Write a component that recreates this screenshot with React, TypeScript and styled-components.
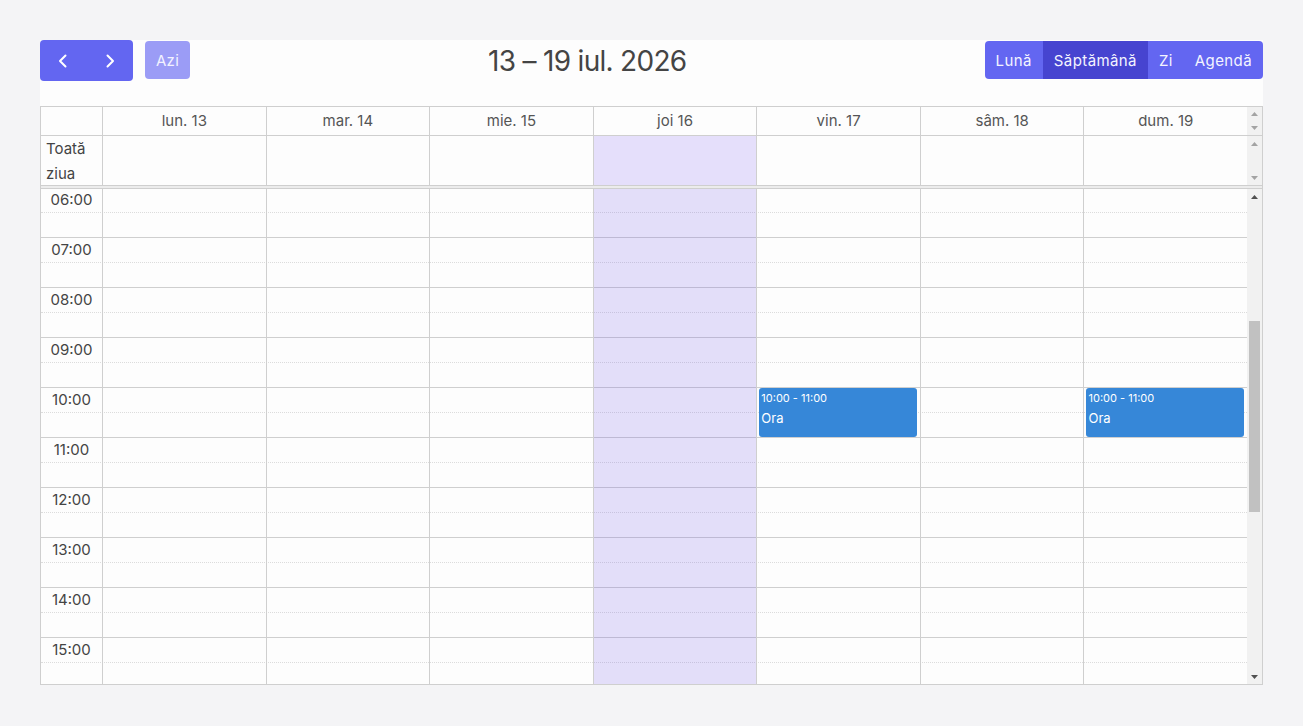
import React, { useEffect, useRef } from 'react';
import styled, { createGlobalStyle } from 'styled-components';

const GlobalStyle = createGlobalStyle`
  html, body {
    margin: 0;
    padding: 0;
    background: #f4f4f6;
    overflow: hidden;
  }
  body {
    font-family: Inter, 'Noto Sans', sans-serif;
  }
`;

const HOUR_H = 50;
const GUTTER = 61;
const LINE = '#cfcfcf';
const BODY_H = 495;
const SCROLL_TOP = 6 * HOUR_H + 1;

const days = ['lun. 13', 'mar. 14', 'mie. 15', 'joi 16', 'vin. 17', 'sâm. 18', 'dum. 19'];
const TODAY = 3;

const events = [
  { day: 4, start: 10, end: 11, time: '10:00 - 11:00', title: 'Ora' },
  { day: 6, start: 10, end: 11, time: '10:00 - 11:00', title: 'Ora' },
];

const Page = styled.div`
  padding: 40px;
`;

const Calendar = styled.div`
  background: #fdfdfd;
  width: 1223px;
`;

const Toolbar = styled.div`
  display: flex;
  justify-content: space-between;
  align-items: flex-start;
  height: 66px;
`;

const LeftGroup = styled.div`
  display: flex;
  align-items: flex-start;
  gap: 12px;
`;

const NavGroup = styled.div`
  display: flex;
  height: 41px;
  background: #6366f1;
  border-radius: 4px;
  overflow: hidden;
`;

const NavButton = styled.button`
  width: 46.5px;
  height: 41px;
  border: 0;
  background: transparent;
  color: #fff;
  display: flex;
  align-items: center;
  justify-content: center;
  padding: 0;
  cursor: pointer;
`;

const TodayButton = styled.button`
  margin-top: 1px;
  height: 38px;
  width: 45px;
  border: 0;
  border-radius: 4px;
  background: #9b9cf6;
  color: #f2f2ff;
  font-family: Inter, sans-serif;
  font-size: 15px;
  letter-spacing: 0.3px;
  padding: 0;
`;

const Title = styled.h2`
  margin: 3px 0 0;
  font-size: 28px;
  font-weight: 400;
  color: #444;
  letter-spacing: -0.7px;
  line-height: 36px;
`;

const ViewGroup = styled.div`
  display: flex;
  margin-top: 1px;
  height: 38px;
  background: #6366f1;
  border-radius: 4px;
  overflow: hidden;
`;

const ViewButton = styled.button<{ $active?: boolean }>`
  border: 0;
  padding: 0 11px;
  background: ${p => (p.$active ? '#4644d0' : 'transparent')};
  color: #f4f4ff;
  font-family: Inter, sans-serif;
  font-size: 15px;
  letter-spacing: 0.4px;
  height: 38px;
`;

const Grid = styled.div`
  border: 1px solid ${LINE};
`;

const Section = styled.div<{ $h: number; $noBottom?: boolean }>`
  display: flex;
  height: ${p => p.$h}px;
  border-bottom: ${p => (p.$noBottom ? '0' : `1px solid ${LINE}`)};
`;

const Cells = styled.div`
  flex: 1;
  display: flex;
  min-width: 0;
`;

const Gutter = styled.div`
  flex: 0 0 ${GUTTER}px;
`;

const AllDayLabel = styled.div`
  flex: 0 0 ${GUTTER - 5}px;
  padding-left: 5px;
  font-size: 15px;
  line-height: 25px;
  color: #444;
`;

const HeadCell = styled.div`
  flex: 1;
  border-left: 1px solid ${LINE};
  text-align: center;
  font-size: 15px;
  line-height: 28px;
  color: #555;
`;

const DayCell = styled.div<{ $today?: boolean }>`
  flex: 1;
  border-left: 1px solid ${LINE};
  background: ${p => (p.$today ? '#e5dffb' : 'transparent')};
`;

const Divider = styled.div`
  height: 2px;
  background: #ececec;
  border-top: 1px solid ${LINE};
  border-bottom: 1px solid ${LINE};
`;

const Body = styled.div`
  flex: 1;
  height: ${BODY_H}px;
  overflow: hidden;
`;

const BodyInner = styled.div`
  position: relative;
`;

const Slot = styled.div<{ $hour: boolean }>`
  display: flex;
  height: ${HOUR_H / 2 - 1}px;
  border-bottom: 1px ${p => (p.$hour ? `solid ${LINE}` : 'dotted #dcdcdc')};
`;

const SlotLabel = styled.div`
  flex: 0 0 ${GUTTER}px;
  text-align: center;
  font-size: 15px;
  line-height: 16px;
  padding-top: 4px;
  color: #444;
  box-sizing: border-box;
`;

const Columns = styled.div`
  position: absolute;
  top: 0;
  bottom: 0;
  left: ${GUTTER}px;
  right: 0;
  display: flex;
`;

const Column = styled.div<{ $today?: boolean }>`
  position: relative;
  flex: 1;
  border-left: 1px solid ${LINE};
  background: ${p => (p.$today ? 'rgba(118, 88, 236, 0.19)' : 'transparent')};
`;

const Event = styled.div`
  position: absolute;
  left: 2px;
  right: 3px;
  background: #3687d8;
  border-radius: 3px;
  color: #fff;
  padding: 3px 2px;
  box-sizing: border-box;
  overflow: hidden;
`;

const EventTime = styled.div`
  font-size: 11px;
  line-height: 14px;
`;

const EventTitle = styled.div`
  font-size: 13px;
  line-height: 16px;
  margin-top: 5px;
`;

/* classic scrollbar look-alike, drawn beside each section */
const ScrollGutter = styled.div`
  flex: 0 0 15px;
  display: flex;
  flex-direction: column;
  background: #f1f1f1;
`;

const ScrollArrow = styled.div<{ $h: number }>`
  flex: 0 0 ${p => p.$h}px;
  display: flex;
  align-items: center;
  justify-content: center;
`;

const ScrollTrack = styled.div`
  flex: 1;
  position: relative;
`;

const ScrollThumb = styled.div`
  position: absolute;
  left: 2px;
  right: 2px;
  background: #c1c1c1;
`;

const Triangle = ({ up, color }: { up: boolean; color: string }) => (
  <svg width="7" height="4" viewBox="0 0 7 4">
    <path d={up ? 'M0 4 L3.5 0 L7 4 Z' : 'M0 0 L3.5 4 L7 0 Z'} fill={color} />
  </svg>
);

const Scrollbar = ({
  arrowH = 15,
  dark = false,
  thumb,
}: {
  arrowH?: number;
  dark?: boolean;
  thumb?: { top: number; height: number };
}) => {
  const color = dark ? '#505050' : '#a3a3a3';
  return (
    <ScrollGutter>
      <ScrollArrow $h={arrowH}>
        <Triangle up color={color} />
      </ScrollArrow>
      <ScrollTrack>{thumb && <ScrollThumb style={{ top: thumb.top, height: thumb.height }} />}</ScrollTrack>
      <ScrollArrow $h={arrowH}>
        <Triangle up={false} color={color} />
      </ScrollArrow>
    </ScrollGutter>
  );
};

const Chevron = ({ dir }: { dir: 'left' | 'right' }) => (
  <svg width="14" height="16" viewBox="0 0 14 16" fill="none">
    <path
      d={dir === 'left' ? 'M9.5 2.5 L4 8 L9.5 13.5' : 'M4.5 2.5 L10 8 L4.5 13.5'}
      stroke="#fff"
      strokeWidth="2"
      strokeLinecap="round"
      strokeLinejoin="round"
    />
  </svg>
);

const pad = (n: number) => (n < 10 ? `0${n}` : `${n}`);

export default function App() {
  const bodyRef = useRef<HTMLDivElement>(null);

  useEffect(() => {
    if (bodyRef.current) bodyRef.current.scrollTop = SCROLL_TOP;
  }, []);

  const total = 24 * HOUR_H;
  const track = BODY_H - 30;
  const thumb = { top: (track * SCROLL_TOP) / total, height: (track * BODY_H) / total };

  const slots = [];
  for (let i = 0; i < 48; i++) {
    const hour = Math.floor(i / 2);
    const first = i % 2 === 0;
    slots.push(
      <Slot key={i} $hour={!first}>
        <SlotLabel>{first ? `${pad(hour)}:00` : ''}</SlotLabel>
      </Slot>
    );
  }

  return (
    <Page>
      <GlobalStyle />
      <Calendar>
        <Toolbar>
          <LeftGroup>
            <NavGroup>
              <NavButton aria-label="înapoi">
                <Chevron dir="left" />
              </NavButton>
              <NavButton aria-label="înainte">
                <Chevron dir="right" />
              </NavButton>
            </NavGroup>
            <TodayButton disabled>Azi</TodayButton>
          </LeftGroup>
          <Title>13 – 19 iul. 2026</Title>
          <ViewGroup>
            <ViewButton>Lună</ViewButton>
            <ViewButton $active>Săptămână</ViewButton>
            <ViewButton>Zi</ViewButton>
            <ViewButton>Agendă</ViewButton>
          </ViewGroup>
        </Toolbar>

        <Grid>
          <Section $h={28}>
            <Cells>
              <Gutter />
              {days.map(d => (
                <HeadCell key={d}>{d}</HeadCell>
              ))}
            </Cells>
            <Scrollbar arrowH={14} />
          </Section>
          <Section $h={49} $noBottom>
            <Cells>
              <AllDayLabel>Toată ziua</AllDayLabel>
              {days.map((d, i) => (
                <DayCell key={d} $today={i === TODAY} />
              ))}
            </Cells>
            <Scrollbar />
          </Section>
          <Divider />
          <Section $h={BODY_H} $noBottom>
            <Body ref={bodyRef}>
              <BodyInner>
                {slots}
                <Columns>
                  {days.map((d, i) => (
                    <Column key={d} $today={i === TODAY}>
                      {events
                        .filter(e => e.day === i)
                        .map(e => (
                          <Event
                            key={e.title + e.start}
                            style={{ top: e.start * HOUR_H, height: (e.end - e.start) * HOUR_H - 1 }}
                          >
                            <EventTime>{e.time}</EventTime>
                            <EventTitle>{e.title}</EventTitle>
                          </Event>
                        ))}
                    </Column>
                  ))}
                </Columns>
              </BodyInner>
            </Body>
            <Scrollbar dark thumb={thumb} />
          </Section>
        </Grid>
      </Calendar>
    </Page>
  );
}
